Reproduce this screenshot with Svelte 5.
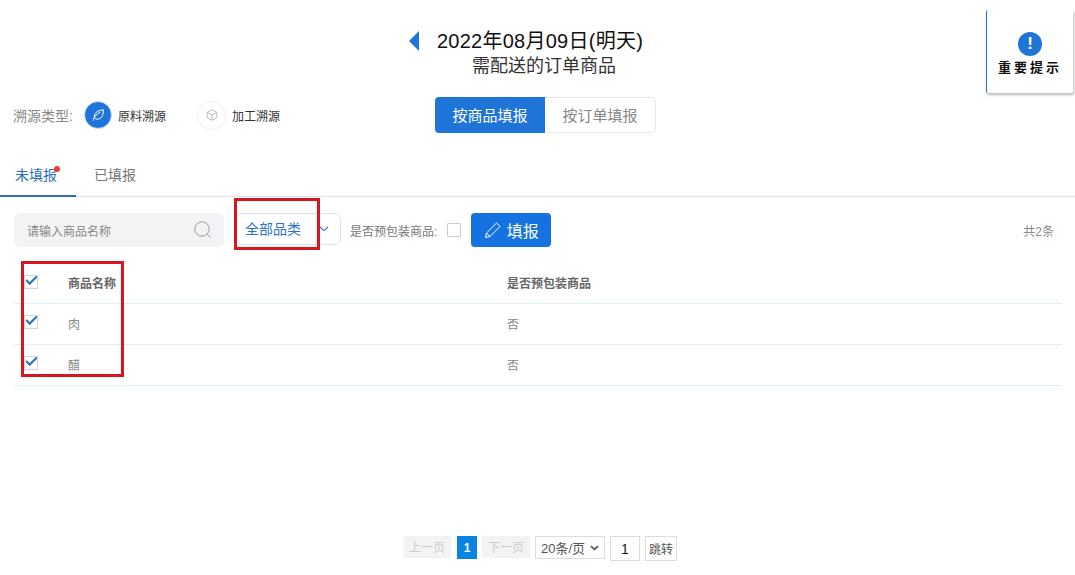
<script>
  const rows = [
    { name: '肉', packed: '否' },
    { name: '醋', packed: '否' }
  ];
</script>

<div class="page">
  <aside class="notice">
    <span class="notice-icon">!</span>
    <strong>重要提示</strong>
  </aside>

  <header class="head">
    <div class="date-line">
      <span class="arrow"></span>
      <span class="date">2022年08月09日(明天)</span>
    </div>
    <div class="sub">需配送的订单商品</div>
  </header>

  <section class="mode-row">
    <div class="trace">
      <span class="trace-label">溯源类型:</span>
      <span class="trace-icon active">
        <svg viewBox="0 0 16 16" width="16" height="16" fill="none" stroke="#fff" stroke-width="1" stroke-linecap="round" stroke-linejoin="round">
          <path d="M3.2 13.2c1-3.6 3.6-6.4 7-8" />
          <path d="M4.5 10.6C3.4 6.6 7 3.2 13.4 2.8c.2 6-2.4 9.6-6.6 9.4-.9 0-1.7-.4-2.3-1.6z" />
        </svg>
      </span>
      <span class="trace-name first">原料溯源</span>
      <span class="trace-icon second">
        <svg viewBox="0 0 16 16" width="14" height="14" fill="none" stroke="#b4b4b4" stroke-width="1" stroke-linejoin="round">
          <path d="M8 2l5.5 3v6L8 14l-5.5-3V5z" />
          <path d="M2.5 5L8 8l5.5-3M8 8v6" />
        </svg>
      </span>
      <span class="trace-name">加工溯源</span>
    </div>
    <div class="switch">
      <button type="button" class="on">按商品填报</button>
      <button type="button">按订单填报</button>
    </div>
  </section>

  <nav class="tabs">
    <span class="tab current">未填报<i class="dot"></i></span>
    <span class="tab">已填报</span>
  </nav>

  <section class="toolbar">
    <div class="search">
      <span>请输入商品名称</span>
      <svg viewBox="0 0 20 20" width="20" height="20" fill="none" stroke="#9a9ea3" stroke-width="1">
        <circle cx="9" cy="9" r="7.2" />
        <path d="M14.2 14.2l3.6 3.6" />
      </svg>
    </div>
    <div class="category">
      <span class="cat-text">全部品类</span>
      <svg viewBox="0 0 10 6" width="10" height="6" fill="none" stroke="#1f74d8" stroke-width="1.1">
        <path d="M1 1l4 3.6L9 1" />
      </svg>
      <i class="mark"></i>
    </div>
    <label class="prepack">是否预包装商品:<span class="box"></span></label>
    <button type="button" class="fill">
      <svg viewBox="0 0 18 18" width="18" height="18" fill="none" stroke="#fff" stroke-width="1" stroke-linejoin="round">
        <path d="M1.5 16.5l1-4.5L12.6 2l3.4 3.4L6 15.5z" />
        <path d="M2.5 12l3.5 3.5" />
      </svg>
      填报
    </button>
    <span class="total">共2条</span>
  </section>

  <section class="table">
    <i class="mark col"></i>
    <div class="row headrow">
      <span class="check on"></span>
      <span class="c-name">商品名称</span>
      <span>是否预包装商品</span>
    </div>
    {#each rows as row}
      <div class="row">
        <span class="check on"></span>
        <span class="c-name">{row.name}</span>
        <span>{row.packed}</span>
      </div>
    {/each}
  </section>

  <footer class="pager">
    <span class="pg muted">上一页</span>
    <span class="pg num">1</span>
    <span class="pg muted next">下一页</span>
    <span class="size">20条/页
      <svg viewBox="0 0 10 6" width="9" height="6" fill="none" stroke="#555" stroke-width="1.8">
        <path d="M1 1l4 3.6L9 1" />
      </svg>
    </span>
    <span class="jump-input">1</span>
    <span class="jump">跳转</span>
  </footer>
</div>

<style>
  :global(body) {
    margin: 0;
    background: #fff;
  }

  .page {
    position: relative;
    width: 1075px;
    height: 575px;
    overflow: hidden;
    font-family: "Liberation Sans", "Noto Sans CJK SC", sans-serif;
    color: #333;
  }

  .notice {
    position: absolute;
    top: 10px;
    left: 986px;
    width: 87px;
    height: 83px;
    box-sizing: border-box;
    border-left: 1px solid #1f74d8;
    border-radius: 2px;
    background: #fff;
    box-shadow: 1px 2px 3px rgba(0, 0, 0, 0.28);
    display: flex;
    flex-direction: column;
    align-items: center;
    padding-top: 22px;
  }

  .notice-icon {
    width: 24px;
    height: 24px;
    border-radius: 50%;
    background: #1f74d8;
    color: #fff;
    font-size: 17px;
    font-weight: 700;
    line-height: 24px;
    text-align: center;
  }

  .notice strong {
    margin-top: 4px;
    font-size: 13px;
    line-height: 16px;
    letter-spacing: 3px;
    white-space: nowrap;
    color: #111;
  }

  .head {
    height: 97px;
    padding-top: 28px;
    box-sizing: border-box;
  }

  .date-line {
    display: flex;
    align-items: center;
    height: 26px;
    padding-left: 409px;
  }

  .arrow {
    width: 0;
    height: 0;
    border-top: 10px solid transparent;
    border-bottom: 10px solid transparent;
    border-right: 10px solid #1f74d8;
    margin-right: 18px;
  }

  .date {
    font-size: 20px;
    line-height: 26px;
    letter-spacing: 0.25px;
    color: #111;
    white-space: nowrap;
  }

  .sub {
    padding-left: 472px;
    font-size: 18px;
    line-height: 24px;
    color: #333;
    white-space: nowrap;
  }

  .mode-row {
    display: flex;
    height: 37px;
    padding-left: 13px;
  }

  .trace {
    display: flex;
    align-items: center;
    width: 422px;
    height: 36px;
  }

  .trace-label {
    width: 71px;
    font-size: 14px;
    color: #888;
    white-space: nowrap;
  }

  .trace-icon {
    display: grid;
    place-items: center;
    width: 28px;
    height: 28px;
    border-radius: 50%;
    border: 1px solid #efefef;
    box-sizing: border-box;
  }

  .trace-icon.active {
    background: #1f74d8;
    border-color: #cfe3f8;
  }

  .trace-icon.second {
    width: 29px;
    height: 29px;
  }

  .trace-name {
    margin-left: 6px;
    font-size: 12px;
    color: #333;
    white-space: nowrap;
  }

  .trace-name.first {
    margin-right: 31px;
  }

  .switch {
    display: flex;
    height: 36px;
    width: 221px;
    box-sizing: border-box;
  }

  .switch button {
    flex: 1;
    border: 1px solid #e6e8eb;
    border-left: 0;
    border-radius: 0 5px 5px 0;
    background: #fff;
    color: #888;
    font: inherit;
    font-size: 15px;
    padding: 0 0 2px;
  }

  .switch button.on {
    border: 0;
    border-radius: 4px 0 0 4px;
    background: #1f74d8;
    color: #fff;
  }

  .tabs {
    display: flex;
    height: 63px;
    box-sizing: border-box;
    padding-top: 26px;
    border-bottom: 1px solid #dfe3e6;
  }

  .tab {
    position: relative;
    width: 76px;
    height: 37px;
    box-sizing: border-box;
    padding-left: 15px;
    font-size: 14px;
    line-height: 30px;
    color: #777;
  }

  .tab + .tab {
    padding-left: 18px;
  }

  .tab.current {
    color: #2a6fc0;
    border-bottom: 2px solid #2a6fc0;
  }

  .dot {
    position: absolute;
    top: 6px;
    left: 54px;
    width: 6px;
    height: 6px;
    border-radius: 50%;
    background: #f03a3a;
  }

  .toolbar {
    display: flex;
    align-items: center;
    height: 34px;
    margin-top: 16px;
    padding-left: 14px;
    padding-right: 21px;
  }

  .search {
    display: flex;
    align-items: center;
    justify-content: space-between;
    width: 210px;
    height: 34px;
    box-sizing: border-box;
    padding: 0 11px 0 13px;
    border-radius: 6px;
    background: #f2f3f5;
    font-size: 12px;
    color: #888;
  }

  .category {
    position: relative;
    display: flex;
    align-items: center;
    align-self: flex-start;
    width: 105px;
    height: 32px;
    margin-left: 12px;
    box-sizing: border-box;
    border: 1px solid #dbe5f1;
    border-radius: 6px;
  }

  .cat-text {
    width: 82px;
    padding-left: 8px;
    padding-bottom: 2px;
    box-sizing: border-box;
    font-size: 14px;
    color: #2a74c8;
    white-space: nowrap;
  }

  .mark {
    position: absolute;
    box-sizing: border-box;
    border: 3px solid #d7161f;
    pointer-events: none;
  }

  .category .mark {
    top: -16px;
    left: -3px;
    width: 86px;
    height: 52px;
  }

  .prepack {
    display: flex;
    align-items: center;
    margin-left: 9px;
    font-size: 12px;
    color: #777;
    white-space: nowrap;
  }

  .box {
    width: 14px;
    height: 14px;
    margin-left: 10px;
    box-sizing: border-box;
    border: 1px solid #ccc;
    border-radius: 1px;
  }

  .fill {
    display: flex;
    align-items: center;
    justify-content: center;
    gap: 5px;
    width: 80px;
    height: 34px;
    margin-left: 10px;
    padding: 0;
    border: 0;
    border-radius: 4px;
    background: #1473e0;
    color: #fff;
    font: inherit;
    font-size: 16px;
  }

  .total {
    margin-left: auto;
    font-size: 12px;
    color: #888;
  }

  .table {
    position: relative;
    width: 1048px;
    margin: 16px 0 0 14px;
    font-size: 12px;
    color: #888;
  }

  .table .mark.col {
    top: -2px;
    left: 7px;
    width: 103px;
    height: 116px;
  }

  .row {
    display: flex;
    align-items: center;
    height: 41px;
    box-sizing: border-box;
    padding-left: 10px;
    padding-bottom: 2px;
    border-bottom: 1px solid #dfeef7;
  }

  .headrow {
    font-weight: 700;
    color: #666;
  }

  .check {
    position: relative;
    top: -1px;
    width: 14px;
    height: 14px;
    box-sizing: border-box;
    border: 1px solid #cfd6de;
  }

  .headrow .check {
    top: 0;
  }

  .check.on::after {
    content: "";
    position: absolute;
    left: 1px;
    top: 0;
    width: 9px;
    height: 4px;
    border-left: 2px solid #2a6fc0;
    border-bottom: 2px solid #2a6fc0;
    transform: rotate(-45deg);
  }

  .c-name {
    width: 439px;
    margin-left: 30px;
  }

  .pager {
    position: absolute;
    top: 536px;
    left: 403px;
    display: flex;
    align-items: flex-start;
    font-size: 12px;
  }

  .pg {
    height: 22px;
    line-height: 24px;
    text-align: center;
    box-sizing: border-box;
  }

  .muted {
    width: 48px;
    background: #f3f3f3;
    color: #ccc;
  }

  .next {
    margin-left: 5px;
  }

  .num {
    width: 20px;
    height: 23px;
    margin-left: 6px;
    background: #0a84e0;
    color: #fff;
    font-weight: 700;
  }

  .size {
    display: flex;
    align-items: center;
    justify-content: space-between;
    width: 70px;
    height: 23px;
    margin-left: 5px;
    padding: 0 5px;
    box-sizing: border-box;
    border: 1px solid #ddd;
    font-size: 13px;
    color: #555;
    white-space: nowrap;
  }

  .jump-input {
    width: 30px;
    height: 25px;
    margin-left: 5px;
    box-sizing: border-box;
    border: 1px solid #ddd;
    font-size: 14px;
    line-height: 24px;
    text-align: center;
    color: #222;
  }

  .jump {
    width: 32px;
    height: 25px;
    margin-left: 5px;
    box-sizing: border-box;
    border: 1px solid #ddd;
    line-height: 27px;
    text-align: center;
    color: #555;
  }
</style>
